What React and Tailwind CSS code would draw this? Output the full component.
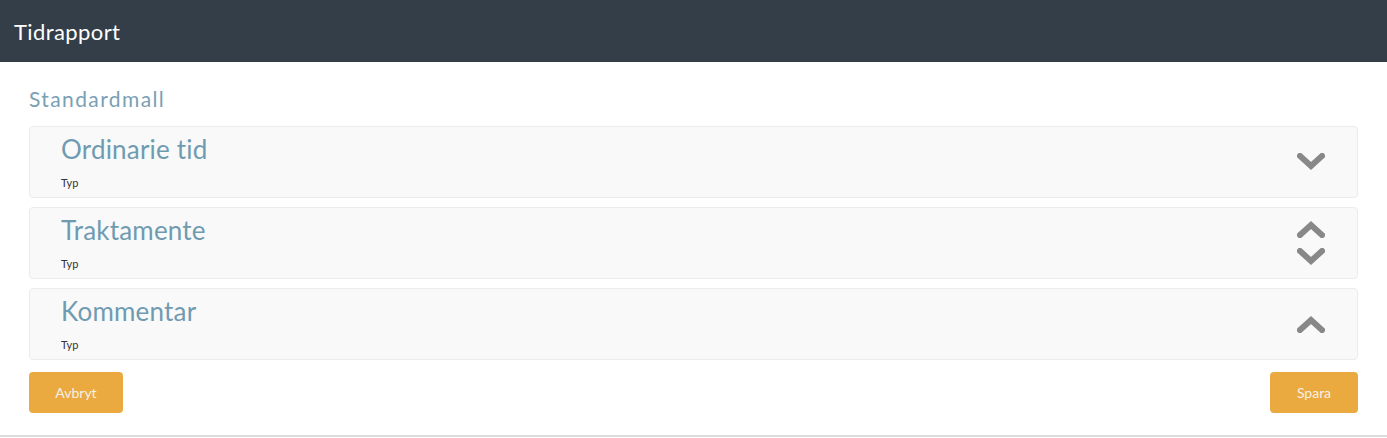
import React from "react";

const Chevron = ({ up }) => (
  <svg width="28" height="18" viewBox="0 0 28 18" className="block">
    <polyline
      points={up ? "3,15 14,5 25,15" : "3,3 14,13 25,3"}
      fill="none"
      stroke="#888888"
      strokeWidth="6"
      strokeLinecap="square"
      strokeLinejoin="miter"
    />
  </svg>
);

const Card = ({ title, icons }) => (
  <div className="flex h-[72px] items-stretch rounded-[4px] border border-[#ececec] bg-[#f9f9f9]">
    <div className="flex flex-1 flex-col pl-[31px] pt-[5px]">
      <div className="text-[26px] leading-[34px] tracking-[0.2px] text-[#6f9bb1]">{title}</div>
      <div className="mt-[10px] text-[11px] leading-[14px] text-[#333]">Typ</div>
    </div>
    <div className="flex w-[90px] flex-col items-center justify-center gap-[10px] pr-[2px]">
      {icons.map((u, i) => (
        <Chevron key={i} up={u} />
      ))}
    </div>
  </div>
);

export default function App() {
  return (
    <div className="w-[1387px] bg-white" style={{ fontFamily: "Lato, 'Noto Sans', sans-serif" }}>
      <div className="flex h-[62px] items-center bg-[#343e48] pl-[14px]">
        <span className="text-[22px] tracking-[0.4px] text-white">Tidrapport</span>
      </div>
      <div className="border-b-2 border-[#dddddd] px-[29px] pb-[22px] pt-[25px]">
        <div className="mb-[15px] text-[21px] leading-[24px] tracking-[1.4px] text-[#7aa0b4]">Standardmall</div>
        <div className="flex flex-col gap-[9px]">
          <Card title="Ordinarie tid" icons={[false]} />
          <Card title="Traktamente" icons={[true, false]} />
          <Card title="Kommentar" icons={[true]} />
        </div>
        <div className="mt-[12px] flex justify-between">
          <button className="h-[41px] w-[94px] rounded-[4px] bg-[#eaaa40] text-[14px] text-[#f5f0e6]">Avbryt</button>
          <button className="h-[41px] w-[88px] rounded-[4px] bg-[#eaaa40] text-[14px] text-[#f5f0e6]">Spara</button>
        </div>
      </div>
    </div>
  );
}
